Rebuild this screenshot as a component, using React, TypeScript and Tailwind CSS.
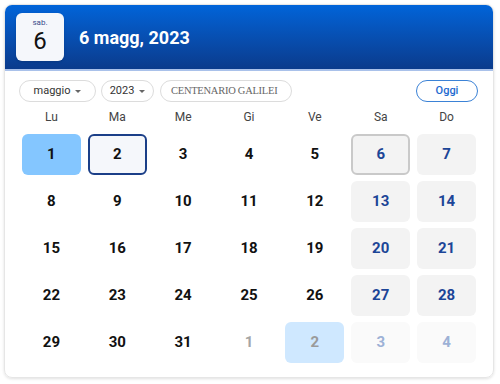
type Cell = { day: number; kind: "normal" | "weekend" | "next" | "nextWeekend" };

const weekdays = ["Lu", "Ma", "Me", "Gi", "Ve", "Sa", "Do"];

function buildCells(): Cell[] {
  const cells: Cell[] = [];
  for (let d = 1; d <= 31; d++) {
    const col = (d - 1) % 7;
    cells.push({ day: d, kind: col >= 5 ? "weekend" : "normal" });
  }
  for (let d = 1; d <= 4; d++) {
    const col = (31 + d - 1) % 7;
    cells.push({ day: d, kind: col >= 5 ? "nextWeekend" : "next" });
  }
  return cells;
}

function dayClass(c: Cell, i: number) {
  // May 1 selected, May 2 focused, May 6 today, Jun 2 hover
  if (i === 0) return "bg-[#84c6ff] text-[#111]";
  if (i === 1) return "bg-[#f5f7fb] border-2 border-[#1b3f88] text-[#111]";
  if (i === 5) return "bg-[#f3f3f3] border-2 border-[#c9c9c9] text-[#1c4597]";
  if (i === 32) return "bg-[#cfe8ff] text-[#9a9a9a]";
  if (c.kind === "weekend") return "bg-[#f3f3f3] text-[#1c4597]";
  if (c.kind === "nextWeekend") return "bg-[#fafafa] text-[#9db1d6]";
  if (c.kind === "next") return "text-[#a5a5a5]";
  return "text-[#111]";
}

function Caret() {
  return (
    <span className="w-0 h-0 border-l-[3px] border-r-[3px] border-t-[3px] border-l-transparent border-r-transparent border-t-[#666]" />
  );
}

export default function App() {
  const cells = buildCells();

  return (
    <div className="w-[500px] h-[384px] bg-white p-[4px] pr-[6px] pb-[6px] font-['Roboto',sans-serif]">
      <div className="h-full rounded-lg border border-[#e6e6e6] shadow-[0_1px_3px_rgba(0,0,0,0.12)] overflow-hidden flex flex-col">
        <div className="h-[66px] bg-gradient-to-b from-[#0064d9] to-[#0a3b8c] border-b-2 border-[#a9c1ea] flex items-center px-[11px] gap-[15px]">
          <div className="w-[48px] h-[48px] rounded-md bg-[#f5f7fb] flex flex-col items-center shadow-sm">
            <span className="text-[8px] leading-none mt-[6px] text-[#3a4a8a]">sab.</span>
            <span className="text-[24px] leading-none mt-[2px] text-[#111]">6</span>
          </div>
          <span className="text-white font-bold text-[18px]">6 magg, 2023</span>
        </div>

        <div className="flex-1">
          <div className="flex items-center mt-[9px] h-[22px] pl-[14px] pr-[15px]">
            <button className="h-[22px] w-[77px] rounded-full border border-[#dcdcdc] flex items-center justify-center gap-[5px] text-[11px] text-[#333]">
              maggio
              <Caret />
            </button>
            <button className="ml-[5px] h-[22px] w-[53px] rounded-full border border-[#dcdcdc] flex items-center justify-center gap-[5px] text-[11px] text-[#333]">
              2023
              <Caret />
            </button>
            <div className="ml-[6px] h-[22px] w-[132px] rounded-full border border-[#dcdcdc] flex items-center pl-[10px] text-[10.5px] text-[#666] font-['Liberation_Serif',serif] tracking-tight">
              CENTENARIO GALILEI
            </div>
            <button className="ml-auto h-[22px] w-[62px] rounded-full border border-[#3b82d6] text-[#1e6ad0] text-[11px] font-medium">
              Oggi
            </button>
          </div>

          <div className="px-[17px]">
            <div className="grid grid-cols-7 gap-x-[7px] mt-[7px] mb-[9px]">
              {weekdays.map((w) => (
                <div key={w} className="text-center text-[12px] leading-[16px] text-[#444]">
                  {w}
                </div>
              ))}
            </div>

            <div className="grid grid-cols-7 gap-x-[7px] gap-y-[6px]">
              {cells.map((c, i) => (
                <div
                  key={i}
                  className={`h-[41px] rounded-md flex items-center justify-center text-[15px] font-bold ${dayClass(c, i)}`}
                >
                  {c.day}
                </div>
              ))}
            </div>
          </div>
        </div>
      </div>
    </div>
  );
}
